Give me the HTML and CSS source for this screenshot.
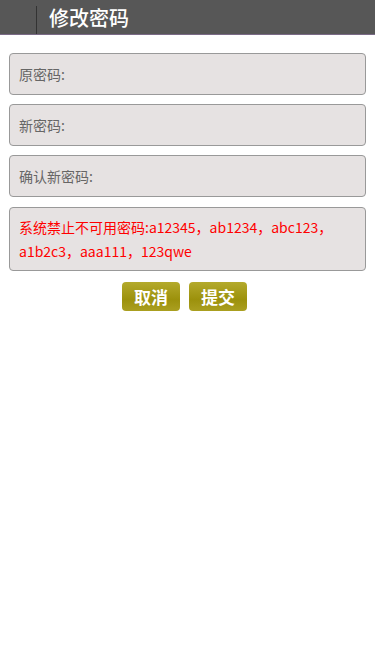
FILE: index.html
```html
<!DOCTYPE html>
<html>
<head>
<meta charset="utf-8">
<link rel="stylesheet" href="styles.css">
</head>
<body>
<div class="header">
  <div class="back"></div>
  <div class="title">修改密码</div>
</div>
<div class="form">
  <div class="field">原密码:</div>
  <div class="field">新密码:</div>
  <div class="field">确认新密码:</div>
  <div class="notice">系统禁止不可用密码:a12345，ab1234，abc123，a1b2c3，aaa111，123qwe</div>
  <div class="buttons">
    <button class="btn">取消</button>
    <button class="btn">提交</button>
  </div>
</div>
</body>
</html>
```

FILE: styles.css
```css
html, body {
  margin: 0;
  padding: 0;
  background: #fff;
  font-family: "Noto Sans CJK SC", "Noto Sans", sans-serif;
}
.header {
  height: 34px;
  background: #575757;
  border-bottom: 1px solid #7a6a86;
  display: flex;
  align-items: stretch;
}
.back {
  width: 36px;
  margin-top: 6px;
  border-right: 1px solid #333;
}
.title {
  color: #fff;
  font-size: 20px;
  font-weight: 500;
  line-height: 36px;
  margin-left: 12px;
}
.form {
  padding: 18px 9px 0 9px;
  display: flex;
  flex-direction: column;
  gap: 9px;
}
.field {
  height: 40px;
  border: 1px solid #999;
  border-radius: 4px;
  background: #e6e2e2;
  color: #666;
  font-size: 14px;
  line-height: 40px;
  padding-left: 9px;
}
.notice {
  border: 1px solid #999;
  border-radius: 4px;
  background: #e6e2e2;
  color: #ff0000;
  font-size: 14px;
  line-height: 24px;
  padding: 7px 9px;
  margin-top: 1px;
}
.buttons {
  display: flex;
  justify-content: center;
  gap: 9px;
  margin-top: 2px;
  padding-right: 6px;
}
.btn {
  width: 58px;
  height: 29px;
  border: none;
  border-radius: 4px;
  background: linear-gradient(#b4aa2c, #9c910c 60%, #aa9f20);
  color: #fff;
  font-family: "Noto Sans CJK SC", sans-serif;
  font-size: 17px;
  font-weight: 700;
  padding: 0;
  line-height: 29px;
}
```
